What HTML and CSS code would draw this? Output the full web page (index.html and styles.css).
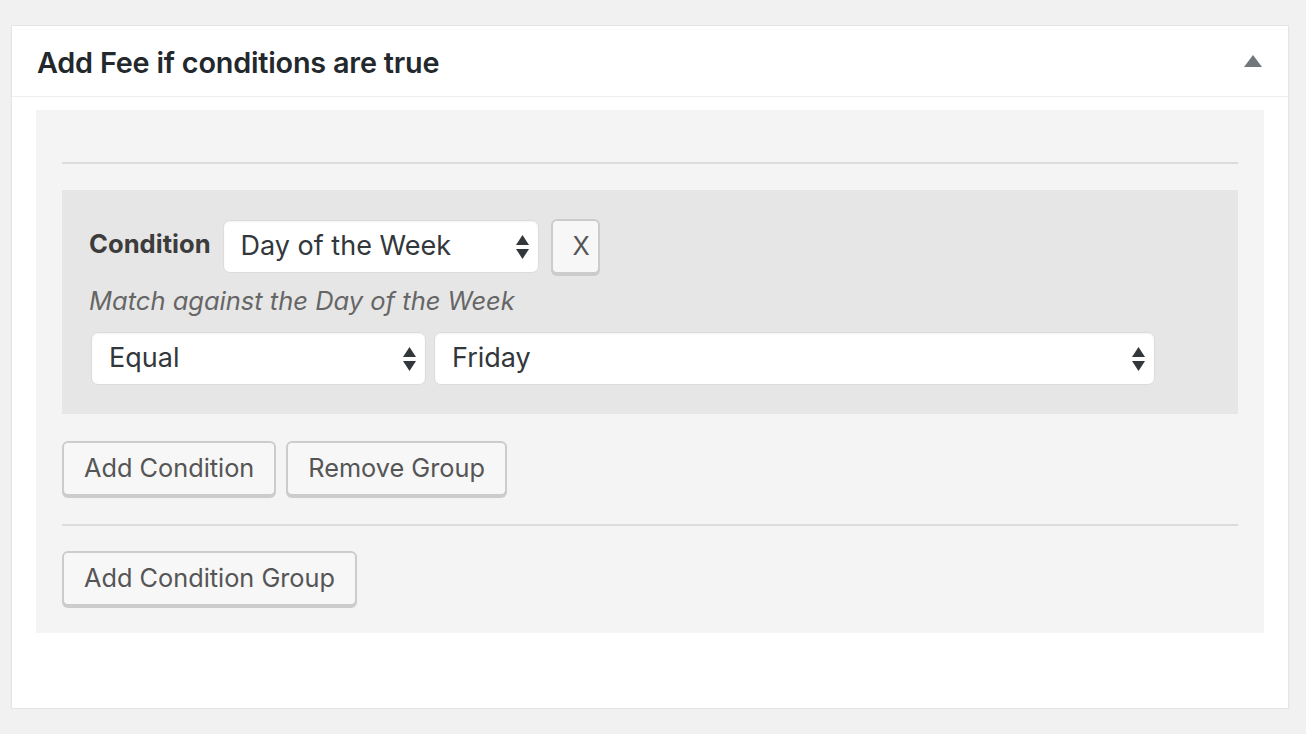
FILE: index.html
```html
<!DOCTYPE html>
<html lang="en">
<head>
<meta charset="utf-8">
<title>Add Fee if conditions are true</title>
<link rel="stylesheet" href="styles.css">
</head>
<body>
<div class="postbox">
  <div class="postbox-header">
    <h2 class="hndle">Add Fee if conditions are true</h2>
    <span class="toggle-arrow" aria-hidden="true">
      <svg width="18" height="12" viewBox="0 0 18 12"><path d="M9 0 L18 12 L0 12 Z" fill="#72777c"/></svg>
    </span>
  </div>
  <div class="inside">
    <div class="groups">
      <hr class="sep first">
      <div class="cond-group">
        <div class="cond-row">
          <label class="cond-label">Condition</label>
          <div class="fake-select sel-type">
            <span class="sel-text">Day of the Week</span>
            <svg class="sel-arrows" width="13" height="24" viewBox="0 0 13 24"><path d="M6.5 0 L13 10 L0 10 Z" fill="#32373c"/><path d="M0 14 L13 14 L6.5 24 Z" fill="#32373c"/></svg>
          </div>
          <button class="button btn-x" type="button">X</button>
        </div>
        <p class="description">Match against the Day of the Week</p>
        <div class="cond-row values">
          <div class="fake-select sel-op">
            <span class="sel-text">Equal</span>
            <svg class="sel-arrows" width="13" height="24" viewBox="0 0 13 24"><path d="M6.5 0 L13 10 L0 10 Z" fill="#32373c"/><path d="M0 14 L13 14 L6.5 24 Z" fill="#32373c"/></svg>
          </div>
          <div class="fake-select sel-val">
            <span class="sel-text">Friday</span>
            <svg class="sel-arrows" width="13" height="24" viewBox="0 0 13 24"><path d="M6.5 0 L13 10 L0 10 Z" fill="#32373c"/><path d="M0 14 L13 14 L6.5 24 Z" fill="#32373c"/></svg>
          </div>
        </div>
      </div>
      <div class="group-actions">
        <button class="button" type="button">Add Condition</button>
        <button class="button" type="button">Remove Group</button>
      </div>
      <hr class="sep">
      <div class="group-actions last">
        <button class="button" type="button">Add Condition Group</button>
      </div>
    </div>
  </div>
</div>
</body>
</html>
```
FILE: styles.css
```css
* { box-sizing: border-box; }
html, body { margin: 0; padding: 0; }
body {
  background: #f1f1f1;
  font-family: Inter, "Noto Sans", "Liberation Sans", sans-serif;
  color: #444;
  padding: 25px 17px 0 11px;
}
.postbox {
  background: #fff;
  border: 1px solid #e5e5e5;
  box-shadow: 0 2px 2px rgba(0,0,0,0.04);
}
.postbox-header {
  height: 71px;
  border-bottom: 1px solid #eee;
  display: flex;
  align-items: center;
  justify-content: space-between;
  padding: 0 26px 0 25px;
}
.hndle {
  margin: 0;
  font-size: 28.8px;
  font-weight: 600;
  color: #23282d;
  letter-spacing: -0.2px;
  padding-top: 2px;
}
.toggle-arrow { display: flex; align-items: center; }
.inside {
  padding: 13px 24px 75px;
}
.groups {
  background: #f4f4f4;
  padding: 52px 26px 27px;
}
.sep {
  border: 0;
  border-top: 2px solid #dcdcdc;
  margin: 0;
}
.sep.first { margin-bottom: 26px; }
.cond-group {
  background: #e6e6e6;
  padding: 29px 27px 29px;
}
.cond-row {
  display: flex;
  align-items: center;
  gap: 12px;
}
.cond-label {
  font-weight: 700;
  font-size: 25.6px;
  color: #3c3c3c;
  padding-bottom: 6px;
}
.fake-select {
  background: #fff;
  border: 1px solid #dcdcdc;
  border-radius: 7px;
  box-shadow: inset 0 1px 2px rgba(0,0,0,0.05);
  height: 53px;
  display: flex;
  align-items: center;
  justify-content: space-between;
  padding: 0 9px 0 17px;
  font-size: 27px;
  color: #32373c;
}
.sel-text { padding-bottom: 2px; }
.sel-arrows { margin-top: 1px; }
.sel-type { width: 316px; }
.btn-x { width: 49px; padding: 0 0 2px; height: 48px; font-size: 22px; }
.description {
  margin: 11px 0 16px;
  font-style: italic;
  font-size: 25.5px;
  color: #666;
}
.values { gap: 8px; margin-left: 2px; }
.sel-op { width: 335px; }
.sel-val { width: 721px; }
.group-actions {
  display: flex;
  gap: 10px;
  padding: 27px 0 28px;
}
.group-actions.last { padding: 25px 0 0; }
.button {
  font-family: inherit;
  font-size: 25.3px;
  color: #555;
  background: #f7f7f7;
  border: 2px solid #ccc;
  border-radius: 6px;
  box-shadow: 0 2px 0 #ccc;
  height: 55px;
  padding: 0 20px 2px;
  cursor: pointer;
}
```
